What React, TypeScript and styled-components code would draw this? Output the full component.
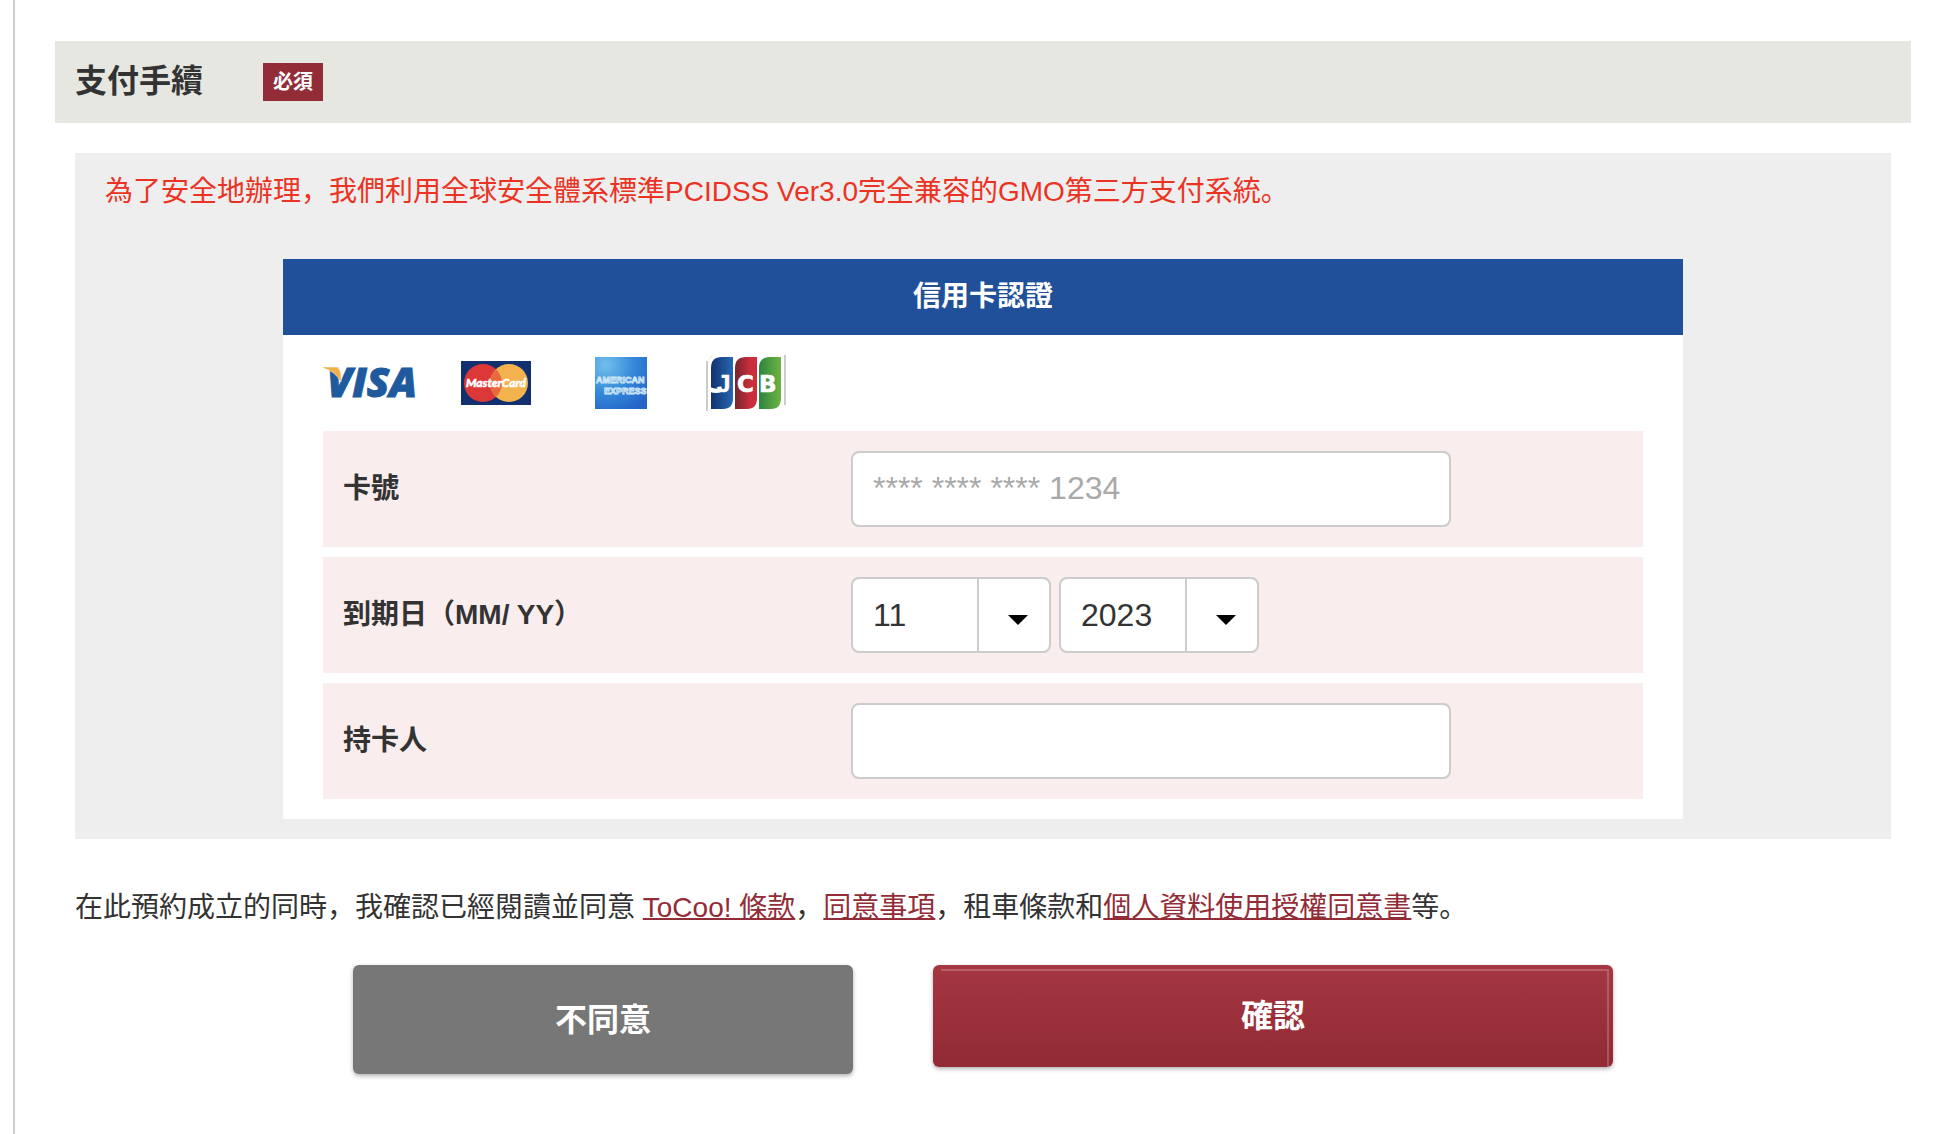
import React from "react";
import styled, { createGlobalStyle } from "styled-components";

const GlobalStyle = createGlobalStyle`
  *, *::before, *::after { box-sizing: border-box; }
  body {
    margin: 0;
    background: #fff;
    color: #333;
    font-family: "Liberation Sans", "Noto Sans CJK JP", sans-serif;
    font-size: 28px;
    line-height: 42px;
  }
`;

const Page = styled.main`
  min-height: 100vh;
  margin-left: 13px;
  padding: 41px 35px 48px 40px;
  border-left: 2px solid #ccc;
`;

const SectionHeader = styled.header`
  display: flex;
  align-items: center;
  gap: 60px;
  padding: 16px 20px;
  background: #e6e7e0;
`;

const SectionTitle = styled.h2`
  margin: 0;
  padding-bottom: 2px;
  font-size: 32px;
  line-height: 48px;
  font-weight: 700;
`;

const RequiredBadge = styled.span`
  padding: 4px 10px;
  background: #922c37;
  color: #fff;
  font-size: 20px;
  line-height: 30px;
  font-weight: 700;
`;

const Content = styled.div`
  padding: 30px 20px 0;
`;

const Panel = styled.section`
  padding: 18px 30px 20px;
  background: #eee;
`;

const Notice = styled.p`
  margin: 0 0 46px;
  color: #ea3323;
`;

const CardBox = styled.div`
  max-width: 1400px;
  margin: 0 auto;
  background: #fff;
`;

const CardTitle = styled.h3`
  margin: 0;
  padding: 17px;
  background: #205099;
  color: #fff;
  font-size: 28px;
  line-height: 42px;
  font-weight: 700;
  text-align: center;
`;

const CardBody = styled.div`
  padding: 0 40px 20px;
`;

const Brands = styled.ul`
  display: grid;
  grid-template-columns: repeat(4, 96px);
  align-items: center;
  justify-items: center;
  gap: 29px;
  height: 96px;
  margin: 0;
  padding: 0;
  list-style: none;

  li { display: flex; }
`;

const Rows = styled.div`
  display: flex;
  flex-direction: column;
  gap: 10px;
`;

const Row = styled.div`
  display: flex;
  align-items: center;
  padding: 20px 0;
  background: #f9eded;
`;

const RowLabel = styled.label`
  flex: 0 0 40%;
  padding: 0 20px;
  font-weight: 700;
`;

const Controls = styled.div`
  display: flex;
  flex: 1;
  gap: 8px;
  padding-right: 20px;
`;

const TextInput = styled.input`
  width: 100%;
  max-width: 600px;
  height: 76px;
  padding: 0 20px 2px;
  border: 2px solid #ccc;
  border-radius: 8px;
  background: #fff;
  color: #333;
  font: 32px "Liberation Sans", "Noto Sans CJK JP", sans-serif;

  &::placeholder { color: #a9a9a9; }
`;

const SelectBox = styled.span`
  position: relative;
  width: 200px;

  &::before {
    content: "";
    position: absolute;
    top: 2px;
    bottom: 2px;
    right: 72px;
    width: 2px;
    background: #ccc;
    pointer-events: none;
  }

  &::after {
    content: "";
    position: absolute;
    top: 38px;
    right: 23px;
    border: 10px solid transparent;
    border-top-color: #000;
    border-bottom: 0;
    pointer-events: none;
  }
`;

const Select = styled.select`
  display: block;
  appearance: none;
  width: 100%;
  height: 76px;
  padding: 0 80px 0 20px;
  border: 2px solid #ccc;
  border-radius: 8px;
  background: #fff;
  color: #333;
  font: 32px "Liberation Sans", "Noto Sans CJK JP", sans-serif;
`;

const Terms = styled.p`
  margin: 48px 0 36px;
`;

const TermsLink = styled.a`
  color: #922c37;
  text-decoration: underline;
  text-decoration-thickness: 2px;
`;

const Actions = styled.div`
  display: flex;
  justify-content: center;
  align-items: flex-start;
  gap: 80px;
`;

const ActionButton = styled.button`
  flex: 0 1 500px;
  height: 109px;
  padding: 0 20px 6px;
  border: 0;
  border-radius: 6px;
  background: #777;
  box-shadow: 0 2px 4px rgba(0, 0, 0, 0.3);
  color: #fff;
  font: 700 32px "Liberation Sans", "Noto Sans CJK JP", sans-serif;
  cursor: pointer;
`;

const ConfirmButton = styled(ActionButton)`
  position: relative;
  flex-basis: 680px;
  height: 102px;
  background: linear-gradient(#a43742, #912a33);

  &::after {
    content: "";
    position: absolute;
    inset: 4px 4px 0 8px;
    border-top: 2px solid rgba(255, 255, 255, 0.2);
    border-right: 2px solid rgba(255, 255, 255, 0.2);
  }
`;

const VisaLogo = () => (
  <svg width="96" height="64" viewBox="0 0 96 64" role="img" aria-label="VISA">
    <text x="4" y="46" fontFamily="Open Sans" fontWeight="800" fontStyle="italic" fontSize="41" fill="#205a9e" stroke="#205a9e" strokeWidth="1">VISA</text>
    <path d="M0 16h13q6 1 5 15Q12 20 0 17Z" fill="#f2b04a" stroke="#fff" strokeWidth=".5" />
  </svg>
);

const MasterCardLogo = () => (
  <svg width="70" height="44" viewBox="0 0 70 44" role="img" aria-label="MasterCard">
    <rect width="70" height="44" fill="#12306f" />
    <circle cx="22" cy="22" r="19" fill="#dc3837" />
    <circle cx="48" cy="22" r="19" fill="#f2b24d" />
    <path d="M35 8.200a19 19 0 0 1 0 27.600a19 19 0 0 1 0-27.600Z" fill="#e66a3c" />
    <g textAnchor="middle" fontFamily="Lato" fontWeight="700" fontStyle="italic" fontSize="12">
      <text x="35" y="26" fill="#fff" stroke="#fff" strokeWidth=".6">MasterCard</text>
    </g>
  </svg>
);

const AmexLogo = () => (
  <svg width="52" height="52" viewBox="0 0 52 52" role="img" aria-label="American Express">
    <defs>
      <radialGradient id="amex" cx=".2" cy=".15" r="1">
        <stop offset="0" stopColor="#72c0ec" />
        <stop offset=".55" stopColor="#3489d8" />
        <stop offset="1" stopColor="#2464c8" />
      </radialGradient>
    </defs>
    <rect width="52" height="52" fill="url(#amex)" />
    <g fontFamily="Liberation Sans" fontWeight="700" fontSize="9" fill="#4b9de0" stroke="#cfe6f8" strokeWidth=".9">
      <text x="1" y="26">AMERICAN</text>
      <text x="9" y="37">EXPRESS</text>
    </g>
  </svg>
);

const JcbLogo = () => (
  <svg width="80" height="56" viewBox="0 0 80 56" role="img" aria-label="JCB">
    <defs>
      <linearGradient id="jcbBlue"><stop stopColor="#12306f" /><stop offset="1" stopColor="#2668b2" /></linearGradient>
      <linearGradient id="jcbRed"><stop stopColor="#74262c" /><stop offset=".7" stopColor="#cb2d3c" /></linearGradient>
      <linearGradient id="jcbGreen"><stop stopColor="#2c8440" /><stop offset="1" stopColor="#6db442" /></linearGradient>
    </defs>
    <path d="M1 6v50M79 0v50" stroke="#ccc" strokeWidth="2" />
    <path d="M3 4l3-3" stroke="#ddd" strokeWidth="1" />
    <path d="M5 54V13Q5 2 16 2H27V43Q27 54 17 54Z" fill="url(#jcbBlue)" />
    <path d="M29 54V13Q29 2 40 2H51V43Q51 54 41 54Z" fill="url(#jcbRed)" />
    <path d="M53 54V13Q53 2 64 2H75V43Q75 54 65 54Z" fill="url(#jcbGreen)" />
    <path d="M4 32q6 3 12 1v4q-6 2-12 0Z" fill="#fff" />
    <g fontWeight="700" fontSize="24" fill="#fff" stroke="#fff" strokeWidth=".6">
      <text x="11" y="37" fontFamily="Liberation Sans">J</text>
      <text x="31" y="37" fontFamily="DejaVu Sans" fontSize="23">C</text>
      <text x="53" y="37" fontFamily="DejaVu Sans" fontSize="23">B</text>
    </g>
  </svg>
);

const months = Array.from({ length: 12 }, (_, i) => String(i + 1).padStart(2, "0"));
const years = Array.from({ length: 10 }, (_, i) => String(2023 + i));

export default function App() {
  return (
    <>
      <GlobalStyle />
      <Page lang="ja">
        <SectionHeader>
          <SectionTitle>支付手續</SectionTitle>
          <RequiredBadge>必須</RequiredBadge>
        </SectionHeader>
        <Content>
          <Panel>
            <Notice>為了安全地辦理，我們利用全球安全體系標準PCIDSS Ver3.0完全兼容的GMO第三方支付系統。</Notice>
            <CardBox>
              <CardTitle>信用卡認證</CardTitle>
              <CardBody>
                <Brands>
                  <li><VisaLogo /></li>
                  <li><MasterCardLogo /></li>
                  <li><AmexLogo /></li>
                  <li><JcbLogo /></li>
                </Brands>
                <Rows>
                  <Row>
                    <RowLabel htmlFor="card-number">卡號</RowLabel>
                    <Controls>
                      <TextInput id="card-number" inputMode="numeric" placeholder="**** **** **** 1234" />
                    </Controls>
                  </Row>
                  <Row>
                    <RowLabel htmlFor="expiry-month">到期日（MM/ YY）</RowLabel>
                    <Controls>
                      <SelectBox>
                        <Select id="expiry-month" defaultValue="11">
                          {months.map((m) => <option key={m}>{m}</option>)}
                        </Select>
                      </SelectBox>
                      <SelectBox>
                        <Select aria-label="YY" defaultValue="2023">
                          {years.map((y) => <option key={y}>{y}</option>)}
                        </Select>
                      </SelectBox>
                    </Controls>
                  </Row>
                  <Row>
                    <RowLabel htmlFor="card-holder">持卡人</RowLabel>
                    <Controls>
                      <TextInput id="card-holder" />
                    </Controls>
                  </Row>
                </Rows>
              </CardBody>
            </CardBox>
          </Panel>
          <Terms>
            在此預約成立的同時，我確認已經閱讀並同意 <TermsLink href="#terms">ToCoo! 條款</TermsLink>，<TermsLink href="#consent">同意事項</TermsLink>，租車條款和<TermsLink href="#privacy">個人資料使用授權同意書</TermsLink>等。
          </Terms>
          <Actions>
            <ActionButton type="button">不同意</ActionButton>
            <ConfirmButton type="submit">確認</ConfirmButton>
          </Actions>
        </Content>
      </Page>
    </>
  );
}
